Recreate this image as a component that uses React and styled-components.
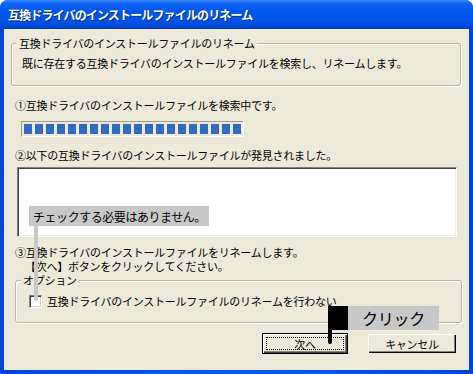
import React from 'react';
import styled, { createGlobalStyle } from 'styled-components';

const GlobalStyle = createGlobalStyle`
  html, body {
    margin: 0;
    padding: 0;
    background: #fff;
  }
  body {
    font-family: "Noto Sans CJK JP", "Noto Sans", sans-serif;
    color: #000;
  }
`;

const Window = styled.div`
  position: relative;
  width: 473px;
  height: 374px;
  display: flex;
  flex-direction: column;
  border-radius: 8px 8px 0 0;
  overflow: hidden;
  background: linear-gradient(to right, #0046d8, #0058ee 50%, #0046d8);
`;

const TitleBar = styled.div`
  flex: none;
  height: 29px;
  display: flex;
  align-items: center;
  padding-left: 8px;
  background: linear-gradient(
    to bottom,
    #3b8cff 0%,
    #0f64f4 12%,
    #0058ee 35%,
    #0055ea 70%,
    #0047d6 92%,
    #003dc4 100%
  );
  color: #fff;
  font-size: 12px;
  font-weight: bold;
  letter-spacing: -0.85px;
  text-shadow: 1px 1px #0a2a8a;
`;

const Frame = styled.div`
  flex: 1;
  margin: 0 4px 4px;
  background: #ece9d8;
  display: flex;
  flex-direction: column;
  font-size: 11px;
  letter-spacing: -0.25px;
  line-height: 14px;
`;

const Group = styled.div`
  position: relative;
  box-sizing: border-box;
  height: 43px;
  margin: ${p => p.$margin};
  border: 1px solid #b8b4a4;
  border-radius: 3px;
  box-shadow: inset 1px 1px #fff, 1px 1px #fff;
`;

const Legend = styled.span`
  position: absolute;
  top: -8px;
  left: ${p => p.$left}px;
  padding: 0 2px;
  background: #ece9d8;
  line-height: 14px;
`;

const Desc = styled.div`
  padding: 12px 0 0 10px;
`;

const Line = styled.div`
  margin-top: ${p => p.$top || 0}px;
  padding-left: ${p => p.$indent}px;
  white-space: nowrap;
`;

const Progress = styled.div`
  box-sizing: border-box;
  width: 223px;
  height: 16px;
  margin: 9px 0 0 17px;
  padding: 2px;
  border: 1px solid;
  border-color: #9a9888 #fff #fff #9a9888;
  display: flex;
  gap: 3px;
`;

const Block = styled.div`
  width: 8px;
  background: #316ac5;
`;

const ListBox = styled.div`
  box-sizing: border-box;
  height: 70px;
  margin: 5px 12px 0 13px;
  background: #fff;
  border: 1px solid;
  border-color: #808080 #fff #fff #808080;
  box-shadow: inset 1px 1px #404040, inset -1px -1px #f1efe2;
`;

const CheckRow = styled.label`
  display: flex;
  align-items: center;
  padding: 13px 0 0 13px;
`;

const CheckBox = styled.span`
  box-sizing: border-box;
  width: 13px;
  height: 13px;
  margin-right: 5px;
  background: #fff;
  border: 1px solid;
  border-color: #808080 #fff #fff #808080;
  box-shadow: inset 1px 1px #404040, inset -1px -1px #d4d0c8;
`;

const ButtonRow = styled.div`
  display: flex;
  justify-content: flex-end;
  gap: 19px;
  margin-top: 10px;
  padding-right: 12px;
`;

const Button = styled.button`
  position: relative;
  box-sizing: border-box;
  width: ${p => p.$width}px;
  height: 21px;
  padding: 0;
  font: inherit;
  letter-spacing: inherit;
  color: #000;
  background: #ece9d8;
  border: 1px solid ${p => (p.$default ? '#000' : 'transparent')};
  box-shadow: ${p =>
    p.$default
      ? 'inset 1px 1px #fff, inset -1px -1px #404040, inset -2px -2px #808080'
      : 'inset 1px 1px #fff, inset -1px -1px #000, inset -2px -2px #808080'};

  &::after {
    content: '';
    display: ${p => (p.$default ? 'block' : 'none')};
    position: absolute;
    inset: 3px;
    border: 1px dotted #000;
  }
`;

const Note = styled.div`
  position: absolute;
  left: 29px;
  top: 206px;
  width: 180px;
  height: 20px;
  display: flex;
  align-items: center;
  padding-left: 4px;
  box-sizing: border-box;
  background: #c8c8c8;
  font-size: 12px;
  letter-spacing: -0.45px;
`;

const Stem = styled.div`
  position: absolute;
  left: ${p => p.$left}px;
  top: ${p => p.$top}px;
  width: 4px;
  height: ${p => p.$height}px;
  background: ${p => p.$color};
  border-radius: 0 0 2px 2px;
`;

const ClickTag = styled.div`
  position: absolute;
  left: 328px;
  top: 306px;
  height: 24px;
  display: flex;
`;

const ClickMark = styled.div`
  width: 20px;
  background: #000;
`;

const ClickLabel = styled.div`
  width: 91px;
  display: flex;
  align-items: center;
  justify-content: center;
  background: #c8c8c8;
  font-size: 16px;
  letter-spacing: -0.3px;
`;

export default function App() {
  const blocks = Array.from({ length: 20 }, (_, i) => i);

  return (
    <>
      <GlobalStyle />
      <Window>
        <TitleBar>互換ドライバのインストールファイルのリネーム</TitleBar>
        <Frame>
          <Group $margin="14px 8px 0 7px">
            <Legend $left={5}>互換ドライバのインストールファイルのリネーム</Legend>
            <Desc>既に存在する互換ドライバのインストールファイルを検索し、リネームします。</Desc>
          </Group>

          <Line $top={12} $indent={11}>①互換ドライバのインストールファイルを検索中です。</Line>
          <Progress>
            {blocks.map(i => (
              <Block key={i} />
            ))}
          </Progress>

          <Line $top={11} $indent={11}>②以下の互換ドライバのインストールファイルが発見されました。</Line>
          <ListBox />

          <Line $top={8} $indent={11}>③互換ドライバのインストールファイルをリネームします。</Line>
          <Line $indent={21}>【次へ】ボタンをクリックしてください。</Line>

          <Group $margin="7px 7px 0 11px">
            <Legend $left={5}>オプション</Legend>
            <CheckRow>
              <CheckBox />
              互換ドライバのインストールファイルのリネームを行わない
            </CheckRow>
          </Group>

          <ButtonRow>
            <Button $default $width={86}>次へ</Button>
            <Button $width={90}>キャンセル</Button>
          </ButtonRow>
        </Frame>

        <Note>チェックする必要はありません。</Note>
        <Stem $left={34} $top={226} $height={75} $color="#c8c8c8" />

        <ClickTag>
          <ClickMark />
          <ClickLabel>クリック</ClickLabel>
        </ClickTag>
        <Stem $left={328} $top={330} $height={14} $color="#000" />
      </Window>
    </>
  );
}
